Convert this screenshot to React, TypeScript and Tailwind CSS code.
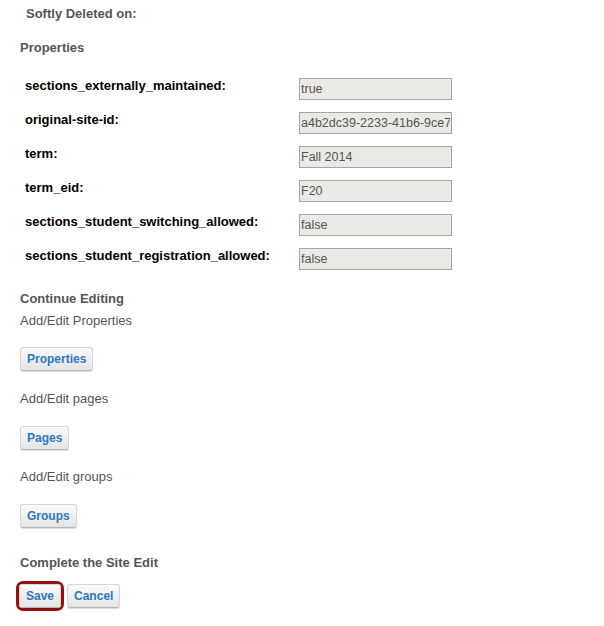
import React from "react"

const props = [
  { label: "sections_externally_maintained:", value: "true" },
  { label: "original-site-id:", value: "a4b2dc39-2233-41b6-9ce7-0b8d1c7e2f11" },
  { label: "term:", value: "Fall 2014" },
  { label: "term_eid:", value: "F20" },
  { label: "sections_student_switching_allowed:", value: "false" },
  { label: "sections_student_registration_allowed:", value: "false" },
]

function Btn({ children }: { children: React.ReactNode }) {
  return (
    <button className="h-[24px] px-[6px] rounded-[3px] border border-[#d6d6d6] border-b-[#b8b8b8] bg-gradient-to-b from-[#fafafa] to-[#e4e4e4] shadow-[0_1px_1px_rgba(0,0,0,0.15)] text-[12px] font-bold text-[#2e78bd] leading-none">
      {children}
    </button>
  )
}

export default function App() {
  return (
    <div className="w-[604px] h-[626px] bg-white font-['Liberation_Sans',Arial,sans-serif] text-[13px]">
      <div className="pt-[6px] pl-[26px] font-bold text-[#555] leading-[16px]">Softly Deleted on:</div>

      <div className="mt-[18px] pl-[20px] font-bold text-[#555] text-[13px] leading-[16px]">Properties</div>

      <div className="mt-[22px] pl-[25px] flex flex-col gap-[12px]">
        {props.map((p) => (
          <div key={p.label} className="flex items-start">
            <div className="w-[274px] font-bold text-black leading-[16px]">{p.label}</div>
            <input
              readOnly
              value={p.value}
              className="w-[153px] h-[22px] border border-[#a5a5a5] bg-[#ebe9e3] text-[12.5px] text-[#555] px-[1px] outline-none font-['Liberation_Sans',Arial,sans-serif]"
            />
          </div>
        ))}
      </div>

      <div className="mt-[21px] pl-[20px] text-[#555]">
        <div className="font-bold leading-[16px]">Continue Editing</div>
        <div className="mt-[6px] leading-[16px]">Add/Edit Properties</div>
        <div className="mt-[18px]">
          <Btn>Properties</Btn>
        </div>
        <div className="mt-[20px] leading-[16px]">Add/Edit pages</div>
        <div className="mt-[19px]">
          <Btn>Pages</Btn>
        </div>
        <div className="mt-[19px] leading-[16px]">Add/Edit groups</div>
        <div className="mt-[19px]">
          <Btn>Groups</Btn>
        </div>
        <div className="mt-[27px] font-bold leading-[16px]">Complete the Site Edit</div>
        <div className="mt-[10px] -ml-[4px] flex items-center gap-[3px]">
          <div className="rounded-[7px] border-[3px] border-[#9b0e0e]">
            <Btn>Save</Btn>
          </div>
          <Btn>Cancel</Btn>
        </div>
      </div>
    </div>
  )
}
